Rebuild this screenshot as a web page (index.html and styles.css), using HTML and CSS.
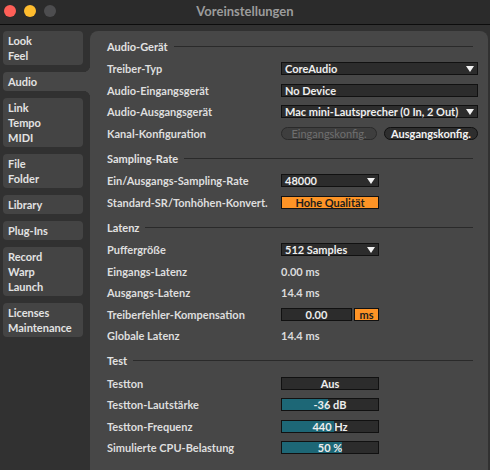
FILE: index.html
```html
<!DOCTYPE html>
<html lang="de">
<head>
    <meta charset="UTF-8">
    <title>Voreinstellungen</title>
    <link rel="stylesheet" href="styles.css">
</head>
<body>
    <div class="titlebar">
        <div class="lights">
            <span class="light red"></span>
            <span class="light yellow"></span>
            <span class="light off"></span>
        </div>
        <div class="title">Voreinstellungen</div>
    </div>

    <div class="window">
        <nav class="sidebar">
            <div class="tab"><span>Look</span><span>Feel</span></div>
            <div class="tab active"><span>Audio</span></div>
            <div class="tab"><span>Link</span><span>Tempo</span><span>MIDI</span></div>
            <div class="tab"><span>File</span><span>Folder</span></div>
            <div class="tab"><span>Library</span></div>
            <div class="tab"><span>Plug-Ins</span></div>
            <div class="tab"><span>Record</span><span>Warp</span><span>Launch</span></div>
            <div class="tab"><span>Licenses</span><span>Maintenance</span></div>
        </nav>

        <main class="panel">
            <section class="section">
                <div class="section-head"><span>Audio-Gerät</span></div>
                <div class="row">
                    <span class="label">Treiber-Typ</span>
                    <div class="box select wide">CoreAudio<i class="arrow"></i></div>
                </div>
                <div class="row">
                    <span class="label">Audio-Eingangsgerät</span>
                    <div class="box wide">No Device</div>
                </div>
                <div class="row">
                    <span class="label">Audio-Ausgangsgerät</span>
                    <div class="box select wide">Mac mini-Lautsprecher (0 In, 2 Out)<i class="arrow"></i></div>
                </div>
                <div class="row">
                    <span class="label">Kanal-Konfiguration</span>
                    <div class="buttons">
                        <button class="btn disabled">Eingangskonfig.</button>
                        <button class="btn">Ausgangskonfig.</button>
                    </div>
                </div>
            </section>

            <section class="section">
                <div class="section-head"><span>Sampling-Rate</span></div>
                <div class="row">
                    <span class="label">Ein/Ausgangs-Sampling-Rate</span>
                    <div class="box select short">48000<i class="arrow"></i></div>
                </div>
                <div class="row">
                    <span class="label">Standard-SR/Tonhöhen-Konvert.</span>
                    <div class="box short center orange">Hohe Qualität</div>
                </div>
            </section>

            <section class="section">
                <div class="section-head"><span>Latenz</span></div>
                <div class="row">
                    <span class="label">Puffergröße</span>
                    <div class="box select short">512 Samples<i class="arrow"></i></div>
                </div>
                <div class="row">
                    <span class="label">Eingangs-Latenz</span>
                    <span class="value">0.00 ms</span>
                </div>
                <div class="row">
                    <span class="label">Ausgangs-Latenz</span>
                    <span class="value">14.4 ms</span>
                </div>
                <div class="row">
                    <span class="label">Treiberfehler-Kompensation</span>
                    <div class="box num center">0.00</div>
                    <div class="box unit center orange">ms</div>
                </div>
                <div class="row">
                    <span class="label">Globale Latenz</span>
                    <span class="value">14.4 ms</span>
                </div>
            </section>

            <section class="section">
                <div class="section-head"><span>Test</span></div>
                <div class="row">
                    <span class="label">Testton</span>
                    <div class="box short center">Aus</div>
                </div>
                <div class="row">
                    <span class="label">Testton-Lautstärke</span>
                    <div class="box short center slider" style="--fill: 48%">-36 dB</div>
                </div>
                <div class="row">
                    <span class="label">Testton-Frequenz</span>
                    <div class="box short center slider" style="--fill: 54%">440 Hz</div>
                </div>
                <div class="row">
                    <span class="label">Simulierte CPU-Belastung</span>
                    <div class="box short center slider" style="--fill: 62%">50 %</div>
                </div>
            </section>
        </main>
    </div>
</body>
</html>
```

FILE: styles.css
```css
body {
    margin: 0;
    width: 490px;
    height: 470px;
    overflow: hidden;
    background-color: #313131;
    font-family: Lato, "Open Sans", sans-serif;
    font-weight: 700;
    font-size: 11px;
    color: #e2e2e2;
}

/* title bar */
.titlebar {
    display: grid;
    grid-template-columns: 1fr auto 1fr;
    align-items: center;
    height: 25px;
    box-sizing: border-box;
    padding-bottom: 3px;
    background-color: #2b2b2b;
    border-bottom: 1px solid #0c0c0c;
}
.lights {
    display: flex;
    gap: 8px;
    padding-left: 4px;
}
.light {
    width: 12px;
    height: 12px;
    border-radius: 50%;
}
.light.red { background-color: #fe5f57; }
.light.yellow { background-color: #febc2e; }
.light.off { background-color: #4d4d4f; }
.title {
    font-size: 13px;
    color: #9c9c9c;
}

/* window body */
.window {
    display: flex;
    padding-top: 6px;
    height: 445px;
    box-sizing: border-box;
}
.sidebar {
    width: 90px;
    flex: none;
    display: flex;
    flex-direction: column;
    gap: 7px;
}
.tab {
    margin-left: 3px;
    width: 80px;
    box-sizing: border-box;
    padding: 2px 5px;
    background-color: #444;
    border-radius: 4px;
    line-height: 15px;
    display: flex;
    flex-direction: column;
}
.tab.active {
    width: 87px;
    border-radius: 4px 0 0 4px;
    background-color: #474747;
    position: relative;
}
.tab.active::before,
.tab.active::after {
    content: "";
    position: absolute;
    right: 0;
    width: 7px;
    height: 7px;
}
.tab.active::before {
    top: -7px;
    background: radial-gradient(circle at 0 0, #313131 7px, #474747 7.5px);
}
.tab.active::after {
    bottom: -7px;
    background: radial-gradient(circle at 0 100%, #313131 7px, #474747 7.5px);
}

.panel {
    flex: 1;
    margin-right: 2px;
    padding: 3px 10px 0 17px;
    background-color: #474747;
    border-radius: 8px 8px 0 0;
}
.section + .section {
    margin-top: 2px;
}
.section-head {
    display: flex;
    align-items: center;
    height: 24px;
}
.section-head::after {
    content: "";
    flex: 1;
    height: 1px;
    margin: 0 5px 0 6px;
    background-color: #2a2a2a;
}
.row {
    display: flex;
    align-items: center;
    height: 21.5px;
}
.label {
    width: 174px;
    flex: none;
    color: #dedede;
}
.value {
    color: #dcdcdc;
}

/* controls */
.box {
    display: flex;
    align-items: center;
    height: 13px;
    box-sizing: border-box;
    padding: 0 3px;
    border: 1px solid #111;
    background-color: #2c2c2c;
    color: #eee;
    line-height: 11px;
    white-space: nowrap;
}
.box.wide { width: 197px; }
.box.short { width: 98px; }
.box.num { width: 71px; }
.box.unit {
    width: 25px;
    margin-left: 2px;
}
.box.center { justify-content: center; }
.box.orange {
    background-color: #fe9426;
    color: #1d1d1d;
}
.box.slider {
    background: linear-gradient(to right, #1d6776 var(--fill), #2c2c2c var(--fill));
}
.select .arrow {
    margin-left: auto;
    width: 0;
    height: 0;
    border-left: 4px solid transparent;
    border-right: 4px solid transparent;
    border-top: 6px solid #f2f2f2;
}

.buttons {
    display: flex;
    gap: 7px;
}
.btn {
    height: 13px;
    padding: 0;
    border: 1px solid #111;
    border-radius: 7px;
    background-color: #2e2e2e;
    color: #f2f2f2;
    font: inherit;
    line-height: 11px;
    width: 94px;
}
.btn.disabled {
    width: 96px;
    background-color: #3e3e3e;
    border-color: #2a2a2a;
    color: #6f6f6f;
    font-weight: 400;
}
```
